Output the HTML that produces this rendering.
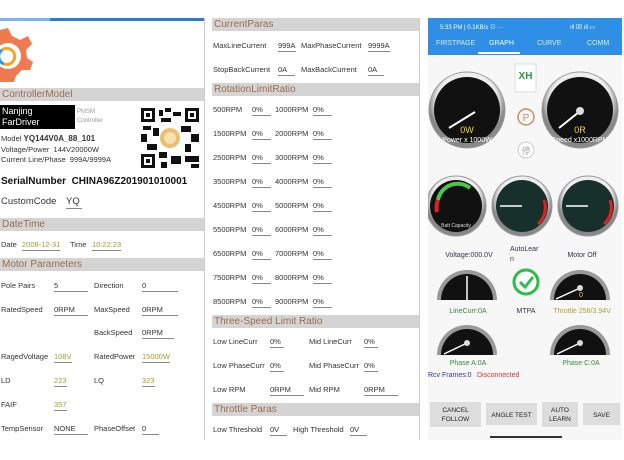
<!DOCTYPE html>
<html><head><meta charset="utf-8"><style>
*{margin:0;padding:0;box-sizing:border-box}
body{width:624px;height:460px;background:#fff;position:relative;overflow:hidden;font-family:"Liberation Sans","Noto Sans CJK SC",sans-serif;font-size:7.5px;color:#333}
.a{position:absolute;white-space:nowrap}
.h{position:absolute;background:#d4d4d4;color:#9a6d4e;font-size:10px;line-height:13px;padding-left:2px;height:13px}
.v{position:absolute;border-bottom:1px solid #888;white-space:nowrap;padding-bottom:1px}
.y{color:#a89a2a}
</style></head><body>
<!-- left panel -->
<div class="a" style="left:0;top:18px;width:205px;height:3px;background:#2a7ad8"></div>
<div class="a" style="left:0;top:18px;width:50px;height:3px;background:#7ab4ee"></div>
<div class="a" style="left:204px;top:18px;width:1px;height:422px;background:#ccc"></div>
<svg class="a" style="left:0;top:24px" width="34" height="60" viewBox="0 0 34 60">
<path d="M0 6 L8 4 L12 12 L20 16 L28 12 L32 20 L26 26 L27 34 L33 38 L30 46 L22 46 L16 52 L14 58 L0 58 Z" fill="#f07a50"/>
<circle cx="8" cy="32" r="13" fill="#fff"/>
<path d="M2 26 A8 8 0 1 1 4 40" stroke="#f5a623" stroke-width="3" fill="none"/>
<path d="M4 40 A8 8 0 0 1 2 26" stroke="#2a9ad8" stroke-width="3" fill="none"/>
</svg>
<div class="h" style="left:0;top:88px;width:204px">ControllerModel</div>
<div class="a" style="left:0;top:105px;width:75px;height:24px;background:#000;color:#fff;font-size:9px;line-height:11px;padding:1px 2px">Nanjing<br>FarDriver</div>
<div class="a" style="left:77px;top:108px;color:#999;font-size:6px;line-height:9px">PMSM<br>Controller</div>
<div class="a" style="left:1px;top:134px">Model <b style="font-size:8px">YQ144V0A_88_101</b></div>
<div class="a" style="left:1px;top:145px">Voltage/Power&nbsp; 144V20000W</div>
<div class="a" style="left:1px;top:155px">Current Line/Phase&nbsp; 999A/9999A</div>
<svg class="a" style="left:141px;top:108px" width="58" height="60" viewBox="0 0 58 60">
<rect width="58" height="60" fill="#fff"/>
<g fill="#111">
<rect x="0" y="0" width="14" height="14"/><rect x="44" y="0" width="14" height="14"/><rect x="0" y="46" width="14" height="14"/>
<rect x="18" y="2" width="4" height="6"/><rect x="24" y="0" width="6" height="4"/><rect x="32" y="4" width="8" height="4"/><rect x="20" y="10" width="10" height="4"/>
<rect x="2" y="18" width="8" height="4"/><rect x="12" y="20" width="6" height="8"/><rect x="0" y="26" width="6" height="8"/><rect x="40" y="18" width="10" height="6"/><rect x="50" y="26" width="8" height="8"/>
<rect x="6" y="36" width="10" height="6"/><rect x="44" y="36" width="6" height="8"/><rect x="18" y="44" width="8" height="6"/><rect x="30" y="48" width="10" height="8"/><rect x="44" y="48" width="14" height="6"/><rect x="20" y="54" width="6" height="6"/><rect x="50" y="56" width="8" height="4"/>
</g>
<g fill="#fff"><rect x="3" y="3" width="8" height="8"/><rect x="47" y="3" width="8" height="8"/><rect x="3" y="49" width="8" height="8"/></g>
<g fill="#111"><rect x="5" y="5" width="4" height="4"/><rect x="49" y="5" width="4" height="4"/><rect x="5" y="51" width="4" height="4"/></g>
<circle cx="29" cy="30" r="10" fill="#e8c070"/><circle cx="29" cy="30" r="6" fill="#f4e2b0"/>
</svg>
<div class="a" style="left:1px;top:176px;font-size:10px;font-weight:bold;color:#111">SerialNumber&nbsp; CHINA96Z201901010001</div>
<div class="a" style="left:1px;top:196px;font-size:9.5px">CustomCode</div>
<div class="v" style="left:66px;top:196px;font-size:9.5px;width:16px">YQ</div>
<div class="h" style="left:0;top:218px;width:204px">DateTime</div>
<div class="a" style="left:1px;top:240px">Date</div><div class="v y" style="left:22px;top:240px">2008-12-31</div>
<div class="a" style="left:70px;top:240px">Time</div><div class="v y" style="left:92px;top:240px">10:22:23</div>
<div class="h" style="left:0;top:258px;width:204px">Motor Parameters</div>
<div class="a" style="left:1px;top:281px">Pole Pairs</div><div class="v" style="left:54px;top:281px;width:34px">5</div>
<div class="a" style="left:94px;top:281px">Direction</div><div class="v" style="left:142px;top:281px;width:36px">0</div>
<div class="a" style="left:1px;top:305px">RatedSpeed</div><div class="v" style="left:54px;top:305px;width:34px">0RPM</div>
<div class="a" style="left:94px;top:305px">MaxSpeed</div><div class="v" style="left:142px;top:305px;width:36px">0RPM</div>
<div class="a" style="left:94px;top:328px">BackSpeed</div><div class="v" style="left:142px;top:328px;width:32px">0RPM</div>
<div class="a" style="left:1px;top:352px">RagedVoltage</div><div class="v y" style="left:54px;top:352px">108V</div>
<div class="a" style="left:94px;top:352px">RatedPower</div><div class="v y" style="left:142px;top:352px">15000W</div>
<div class="a" style="left:1px;top:376px">LD</div><div class="v y" style="left:54px;top:376px">223</div>
<div class="a" style="left:94px;top:376px">LQ</div><div class="v y" style="left:142px;top:376px">323</div>
<div class="a" style="left:1px;top:400px">FAIF</div><div class="v y" style="left:54px;top:400px">357</div>
<div class="a" style="left:1px;top:424px">TempSensor</div><div class="v" style="left:54px;top:424px;width:34px">NONE</div>
<div class="a" style="left:94px;top:424px">PhaseOffset</div><div class="v" style="left:142px;top:424px;width:17px">0</div>

<!-- middle panel -->
<div class="a" style="left:419px;top:18px;width:1px;height:422px;background:#ccc"></div>
<div class="h" style="left:212px;top:18px;width:207px">CurrentParas</div>
<div class="a" style="left:213px;top:41px">MaxLineCurrent</div><div class="v" style="left:278px;top:41px">999A</div>
<div class="a" style="left:301px;top:41px">MaxPhaseCurrent</div><div class="v" style="left:368px;top:41px">9999A</div>
<div class="a" style="left:213px;top:65px">StopBackCurrent</div><div class="v" style="left:278px;top:65px;width:17px">0A</div>
<div class="a" style="left:301px;top:65px">MaxBackCurrent</div><div class="v" style="left:368px;top:65px;width:16px">0A</div>
<div class="h" style="left:212px;top:83px;width:207px">RotationLimitRatio</div>

<div class="a" style="left:213px;top:105px">500RPM</div><div class="v" style="left:252px;top:105px;width:19px">0%</div><div class="a" style="left:275px;top:105px">1000RPM</div><div class="v" style="left:313px;top:105px;width:19px">0%</div>
<div class="a" style="left:213px;top:129px">1500RPM</div><div class="v" style="left:252px;top:129px;width:19px">0%</div><div class="a" style="left:275px;top:129px">2000RPM</div><div class="v" style="left:313px;top:129px;width:19px">0%</div>
<div class="a" style="left:213px;top:153px">2500RPM</div><div class="v" style="left:252px;top:153px;width:19px">0%</div><div class="a" style="left:275px;top:153px">3000RPM</div><div class="v" style="left:313px;top:153px;width:19px">0%</div>
<div class="a" style="left:213px;top:177px">3500RPM</div><div class="v" style="left:252px;top:177px;width:19px">0%</div><div class="a" style="left:275px;top:177px">4000RPM</div><div class="v" style="left:313px;top:177px;width:19px">0%</div>
<div class="a" style="left:213px;top:201px">4500RPM</div><div class="v" style="left:252px;top:201px;width:19px">0%</div><div class="a" style="left:275px;top:201px">5000RPM</div><div class="v" style="left:313px;top:201px;width:19px">0%</div>
<div class="a" style="left:213px;top:225px">5500RPM</div><div class="v" style="left:252px;top:225px;width:19px">0%</div><div class="a" style="left:275px;top:225px">6000RPM</div><div class="v" style="left:313px;top:225px;width:19px">0%</div>
<div class="a" style="left:213px;top:249px">6500RPM</div><div class="v" style="left:252px;top:249px;width:19px">0%</div><div class="a" style="left:275px;top:249px">7000RPM</div><div class="v" style="left:313px;top:249px;width:19px">0%</div>
<div class="a" style="left:213px;top:273px">7500RPM</div><div class="v" style="left:252px;top:273px;width:19px">0%</div><div class="a" style="left:275px;top:273px">8000RPM</div><div class="v" style="left:313px;top:273px;width:19px">0%</div>
<div class="a" style="left:213px;top:297px">8500RPM</div><div class="v" style="left:252px;top:297px;width:19px">0%</div><div class="a" style="left:275px;top:297px">9000RPM</div><div class="v" style="left:313px;top:297px;width:19px">0%</div>

<div class="h" style="left:212px;top:315px;width:207px">Three-Speed Limit Ratio</div>
<div class="a" style="left:213px;top:337px">Low LineCurr</div><div class="v" style="left:270px;top:337px;width:14px">0%</div>
<div class="a" style="left:309px;top:337px">Mid LineCurr</div><div class="v" style="left:364px;top:337px;width:14px">0%</div>
<div class="a" style="left:213px;top:361px">Low PhaseCurr</div><div class="v" style="left:270px;top:361px;width:14px">0%</div>
<div class="a" style="left:309px;top:361px">Mid PhaseCurr</div><div class="v" style="left:364px;top:361px;width:14px">0%</div>
<div class="a" style="left:213px;top:385px">Low RPM</div><div class="v" style="left:270px;top:385px;width:34px">0RPM</div>
<div class="a" style="left:309px;top:385px">Mid RPM</div><div class="v" style="left:364px;top:385px;width:34px">0RPM</div>
<div class="h" style="left:212px;top:403px;width:207px">Throttle Paras</div>
<div class="a" style="left:213px;top:425px">Low Threshold</div><div class="v" style="left:270px;top:425px;width:17px">0V</div>
<div class="a" style="left:293px;top:425px">High Threshold</div><div class="v" style="left:350px;top:425px;width:17px">0V</div>

<!-- right phone -->
<div class="a" style="left:428px;top:18px;width:194px;height:422px;background:#f7f7f7"></div>
<div class="a" style="left:428px;top:18px;width:194px;height:37px;background:#2f8fe6"></div>
<div class="a" style="left:440px;top:22px;color:#fff;font-size:6px">5:33 PM | 0.1KB/s ⊙ ···</div>
<div class="a" style="left:570px;top:22px;color:#fff;font-size:6px">ıll ⊠ ıll ▭</div>
<div class="a" style="left:436px;top:40px;color:#dce9f8;font-size:7px">FIRSTPAGE</div>
<div class="a" style="left:489px;top:40px;color:#fff;font-size:7px">GRAPH</div>
<div class="a" style="left:537px;top:40px;color:#dce9f8;font-size:7px">CURVE</div>
<div class="a" style="left:587px;top:40px;color:#dce9f8;font-size:7px">COMM</div>
<div class="a" style="left:478px;top:52px;width:42px;height:2px;background:#fff"></div>
<svg class="a" style="left:428px;top:55px" width="194" height="385" viewBox="428 55 194 385" font-family="Liberation Sans,Noto Sans CJK SC,sans-serif">
<defs>
<radialGradient id="rim" cx="50%" cy="40%"><stop offset="80%" stop-color="#eee"/><stop offset="100%" stop-color="#888"/></radialGradient>
</defs>
<circle cx="467" cy="110" r="38" fill="url(#rim)" stroke="#999"/>
<circle cx="467" cy="110" r="33" fill="#111"/>
<path d="M449 128 L475 112" stroke="#fff" stroke-width="2"/>
<text x="467" y="133" fill="#e8d840" font-size="9" text-anchor="middle">0W</text>
<text x="467" y="142" fill="#fff" font-size="7" text-anchor="middle">Power x 1000W</text>
<circle cx="580" cy="110" r="38" fill="url(#rim)" stroke="#999"/>
<circle cx="580" cy="110" r="33" fill="#111"/>
<path d="M559 128 L579 112" stroke="#fff" stroke-width="2"/><circle cx="580" cy="111" r="4" fill="#ddd"/>
<text x="580" y="133" fill="#e8d840" font-size="9" text-anchor="middle">0R</text>
<text x="580" y="142" fill="#fff" font-size="7" text-anchor="middle">Speed x1000RPM</text>
<rect x="515" y="64" width="21" height="28" fill="#fff" stroke="#ddd"/>
<text x="525.5" y="79" fill="#2a9a3a" font-size="10" font-weight="bold" text-anchor="middle">XH</text>
<circle cx="526" cy="117" r="8" fill="none" stroke="#c89060" stroke-width="1.5"/>
<text x="526" y="121" fill="#c89060" font-size="10" text-anchor="middle">P</text>
<circle cx="526" cy="150" r="8" fill="#fff" stroke="#ccc"/>
<text x="526" y="154" fill="#aaa" font-size="9" text-anchor="middle">停</text>
<circle cx="456" cy="206" r="30" fill="url(#rim)" stroke="#999"/><circle cx="456" cy="206" r="26" fill="#111"/>
<path d="M438 200 A20 20 0 0 1 470 188" stroke="#4ec44e" stroke-width="4" fill="none"/>
<path d="M437 212 A20 20 0 0 1 438 200" stroke="#d22" stroke-width="4" fill="none"/>
<text x="456" y="227" fill="#ddd" font-size="5" text-anchor="middle">Batt Capacity</text>
<circle cx="522" cy="206" r="30" fill="url(#rim)" stroke="#999"/><circle cx="522" cy="206" r="26" fill="#17302c"/>
<path d="M500 206 H522" stroke="#fff" stroke-width="1.5"/><path d="M538 224 A22 22 0 0 0 544 200" stroke="#d22" stroke-width="3" fill="none"/>
<circle cx="588" cy="206" r="30" fill="url(#rim)" stroke="#999"/><circle cx="588" cy="206" r="26" fill="#17302c"/>
<path d="M566 206 H588" stroke="#fff" stroke-width="1.5"/><path d="M604 224 A22 22 0 0 0 610 200" stroke="#d22" stroke-width="3" fill="none"/>
<text x="469" y="257" fill="#334" font-size="7" text-anchor="middle">Voltage:000.0V</text>
<text x="510" y="251" fill="#334" font-size="7">AutoLear</text><text x="510" y="261" fill="#334" font-size="7">n</text>
<text x="582" y="257" fill="#334" font-size="7" text-anchor="middle">Motor Off</text>
<path d="M437 300 A30 30 0 0 1 497 300 Z" fill="#999"/><path d="M441 300 A26 26 0 0 1 493 300 Z" fill="#111"/>
<path d="M467 300 L467 276" stroke="#fff" stroke-width="1.5"/>
<path d="M550 300 A30 30 0 0 1 610 300 Z" fill="#999"/><path d="M554 300 A26 26 0 0 1 606 300 Z" fill="#111"/>
<path d="M556 299 L580 288" stroke="#fff" stroke-width="1.5"/><circle cx="580" cy="288" r="3" fill="#ddd"/>
<text x="581" y="297" fill="#e8d840" font-size="7" text-anchor="middle">0</text>
<path d="M437 355 A30 30 0 0 1 497 355 Z" fill="#999"/><path d="M441 355 A26 26 0 0 1 493 355 Z" fill="#111"/>
<path d="M444 354 L467 343" stroke="#fff" stroke-width="1.5"/><circle cx="467" cy="343" r="3" fill="#ddd"/>
<path d="M550 355 A30 30 0 0 1 610 355 Z" fill="#999"/><path d="M554 355 A26 26 0 0 1 606 355 Z" fill="#111"/>
<path d="M557 354 L580 343" stroke="#fff" stroke-width="1.5"/><circle cx="580" cy="343" r="3" fill="#ddd"/>
<circle cx="526" cy="282" r="12" fill="#fff" stroke="#2dbb4a" stroke-width="3"/>
<path d="M520 282 L525 287 L533 277" stroke="#2dbb4a" stroke-width="3" fill="none"/>
<text x="468" y="313" fill="#3a8a3a" font-size="7" text-anchor="middle">LineCurr:0A</text>
<text x="526" y="313" fill="#334" font-size="7" text-anchor="middle">MTPA</text>
<text x="582" y="313" fill="#b0a030" font-size="7" text-anchor="middle">Throttle 256/3.94V</text>
<text x="468" y="365" fill="#3a8a3a" font-size="7" text-anchor="middle">Phase A:0A</text>
<text x="581" y="365" fill="#3a8a3a" font-size="7" text-anchor="middle">Phase C:0A</text>
<text x="428" y="377" fill="#33a" font-size="7">Rcv Frames:0</text>
<text x="477" y="377" fill="#d33" font-size="7">Disconnected</text>
<rect x="430" y="402" width="51" height="25" fill="#ddd"/><text x="455.5" y="412" font-size="6.5" text-anchor="middle" fill="#222">CANCEL</text><text x="455.5" y="421" font-size="6.5" text-anchor="middle" fill="#222">FOLLOW</text>
<rect x="486" y="403" width="51" height="22" fill="#ddd"/><text x="511.5" y="417" font-size="6.5" text-anchor="middle" fill="#222">ANGLE TEST</text>
<rect x="542" y="402" width="36" height="25" fill="#ddd"/><text x="560" y="412" font-size="6.5" text-anchor="middle" fill="#222">AUTO</text><text x="560" y="421" font-size="6.5" text-anchor="middle" fill="#222">LEARN</text>
<rect x="583" y="403" width="37" height="22" fill="#ddd"/><text x="601.5" y="417" font-size="6.5" text-anchor="middle" fill="#222">SAVE</text>
<rect x="490" y="436" width="72" height="2" fill="#333"/>
</svg>
</body></html>
